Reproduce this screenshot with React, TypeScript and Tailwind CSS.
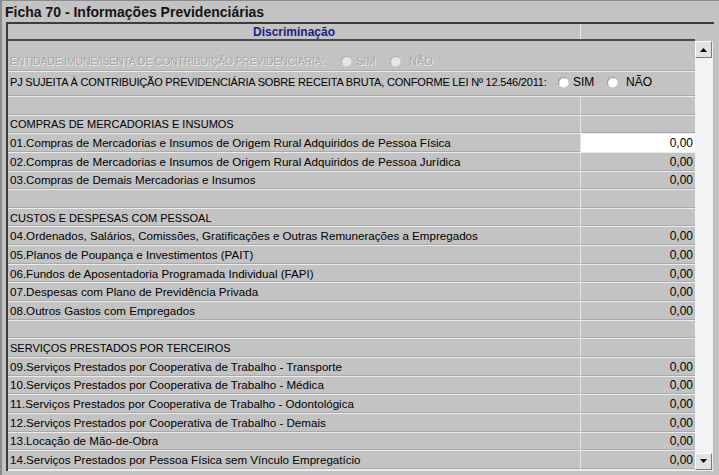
import type { ReactNode } from "react";

type Row =
  | { kind: "empty" }
  | { kind: "section"; label: string }
  | { kind: "item"; label: string; value: string; selected?: boolean };

const rows: Row[] = [
  { kind: "empty" },
  { kind: "section", label: "COMPRAS DE MERCADORIAS E INSUMOS" },
  { kind: "item", label: "01.Compras de Mercadorias e Insumos de Origem Rural Adquiridos de Pessoa Física", value: "0,00", selected: true },
  { kind: "item", label: "02.Compras de Mercadorias e Insumos de Origem Rural Adquiridos de Pessoa Jurídica", value: "0,00" },
  { kind: "item", label: "03.Compras de Demais Mercadorias e Insumos", value: "0,00" },
  { kind: "empty" },
  { kind: "section", label: "CUSTOS E DESPESAS COM PESSOAL" },
  { kind: "item", label: "04.Ordenados, Salários, Comissões, Gratificações e Outras Remunerações a Empregados", value: "0,00" },
  { kind: "item", label: "05.Planos de Poupança e Investimentos (PAIT)", value: "0,00" },
  { kind: "item", label: "06.Fundos de Aposentadoria Programada Individual (FAPI)", value: "0,00" },
  { kind: "item", label: "07.Despesas com Plano de Previdência Privada", value: "0,00" },
  { kind: "item", label: "08.Outros Gastos com Empregados", value: "0,00" },
  { kind: "empty" },
  { kind: "section", label: "SERVIÇOS PRESTADOS POR TERCEIROS" },
  { kind: "item", label: "09.Serviços Prestados por Cooperativa de Trabalho - Transporte", value: "0,00" },
  { kind: "item", label: "10.Serviços Prestados por Cooperativa de Trabalho - Médica", value: "0,00" },
  { kind: "item", label: "11.Serviços Prestados por Cooperativa de Trabalho - Odontológica", value: "0,00" },
  { kind: "item", label: "12.Serviços Prestados por Cooperativa de Trabalho - Demais", value: "0,00" },
  { kind: "item", label: "13.Locação de Mão-de-Obra", value: "0,00" },
  { kind: "item", label: "14.Serviços Prestados por Pessoa Física sem Vínculo Empregatício", value: "0,00" },
];

function Radio({ disabled }: { disabled?: boolean }) {
  return (
    <svg width="11" height="11" viewBox="0 0 11 11" className="shrink-0">
      <circle cx="5.5" cy="5.5" r="5" fill={disabled ? "#e6e6e6" : "#ffffff"} />
      <path d="M1.2 8 A5 5 0 0 1 8 1.2" fill="none" stroke={disabled ? "#b4b4b4" : "#9a9a9a"} strokeWidth="1.2" />
    </svg>
  );
}

function RadioGroup({ disabled }: { disabled?: boolean }) {
  const txt = disabled
    ? "text-[#a6a6a6] [text-shadow:1px_1px_0_#ececec] text-[11px]"
    : "text-black text-[12px]";
  return (
    <div className={`flex items-center whitespace-nowrap ${txt}`}>
      <Radio disabled={disabled} />
      <span className="ml-[4px] w-[34px]">SIM</span>
      <Radio disabled={disabled} />
      <span className="ml-[8px]">NÃO</span>
    </div>
  );
}

function GridRow({ left, right, selected }: { left?: ReactNode; right?: ReactNode; selected?: boolean }) {
  return (
    <div className="flex h-[18.65px] border-b border-[#ececec] shadow-[inset_0_-1px_0_#a9a9a9]">
      <div className="w-[573px] pl-[2px] flex items-center border-r border-[#e4e4e4] whitespace-nowrap overflow-hidden">
        {left}
      </div>
      <div className={`w-[114px] pr-[2px] flex items-center justify-end ${selected ? "bg-white" : ""}`}>
        {right}
      </div>
    </div>
  );
}

function ScrollButton({ up }: { up?: boolean }) {
  return (
    <div className="h-[17px] w-[17px] bg-[#e2e2e2] border-t border-l border-white border-r border-b border-r-[#7a7a7a] border-b-[#7a7a7a] flex items-center justify-center">
      <svg width="7" height="4" viewBox="0 0 7 4">
        {up ? <path d="M0 4 L3.5 0 L7 4 Z" fill="#000" /> : <path d="M0 0 L7 0 L3.5 4 Z" fill="#000" />}
      </svg>
    </div>
  );
}

export default function App() {
  return (
    <div
      className="w-[719px] h-[475px] overflow-hidden bg-[#c3c3c3] border-l-2 border-t border-[#8c8c8c] text-[12px] leading-[14px] text-black"
      style={{ fontFamily: '"Liberation Sans", Arial, sans-serif' }}
    >
      <div className="h-[21px] pl-[3px] flex items-center text-[14px] font-bold text-[#141414]">
        Ficha 70 - Informações Previdenciárias
      </div>
      <div className="pl-[4px]">
        <div className="w-[708px] border-t-2 border-l-2 border-[#3c3c3c]">
          <div className="flex h-[17px]">
            <div className="w-[687px] flex border-b-2 border-[#4a4a4a]">
              <div className="w-[573px] flex items-center justify-center font-bold text-[#1c1c86] border-r border-[#e8e8e8]">
                Discriminação
              </div>
              <div className="w-[114px]" />
            </div>
          </div>
          <div className="flex">
            <div className="w-[687px]">
              <div className="h-[31px] flex items-end pb-[3px] pl-[2px] border-b border-[#ececec] shadow-[inset_0_-1px_0_#a9a9a9] whitespace-nowrap">
                <span className="w-[331px] text-[10.5px] tracking-[-0.2px] text-[#a6a6a6] [text-shadow:1px_1px_0_#ececec]">
                  ENTIDADE IMUNE/ISENTA DE CONTRIBUIÇÃO PREVIDENCIÁRIA:
                </span>
                <RadioGroup disabled />
              </div>
              <div className="h-[25px] flex items-start pt-[3px] pl-[2px] border-b border-[#ececec] shadow-[inset_0_-1px_0_#a9a9a9] whitespace-nowrap">
                <span className="w-[548px] text-[11px] tracking-[-0.2px]">
                  PJ SUJEITA À CONTRIBUIÇÃO PREVIDENCIÁRIA SOBRE RECEITA BRUTA, CONFORME LEI Nº 12.546/2011:
                </span>
                <RadioGroup />
              </div>
              {rows.map((r, i) => {
                if (r.kind === "empty") return <GridRow key={i} />;
                if (r.kind === "section")
                  return <GridRow key={i} left={<span className="text-[11px]">{r.label}</span>} />;
                return (
                  <GridRow
                    key={i}
                    left={<span className="text-[11.6px]">{r.label}</span>}
                    right={<span>{r.value}</span>}
                    selected={r.selected}
                  />
                );
              })}
            </div>
            <div className="w-[18px] flex flex-col border-r border-[#ededed]">
              <ScrollButton up />
              <div className="flex-1 bg-[#f3f3f3]" />
              <ScrollButton />
            </div>
          </div>
          <div className="h-px bg-[#ececec]" />
        </div>
      </div>
    </div>
  );
}
